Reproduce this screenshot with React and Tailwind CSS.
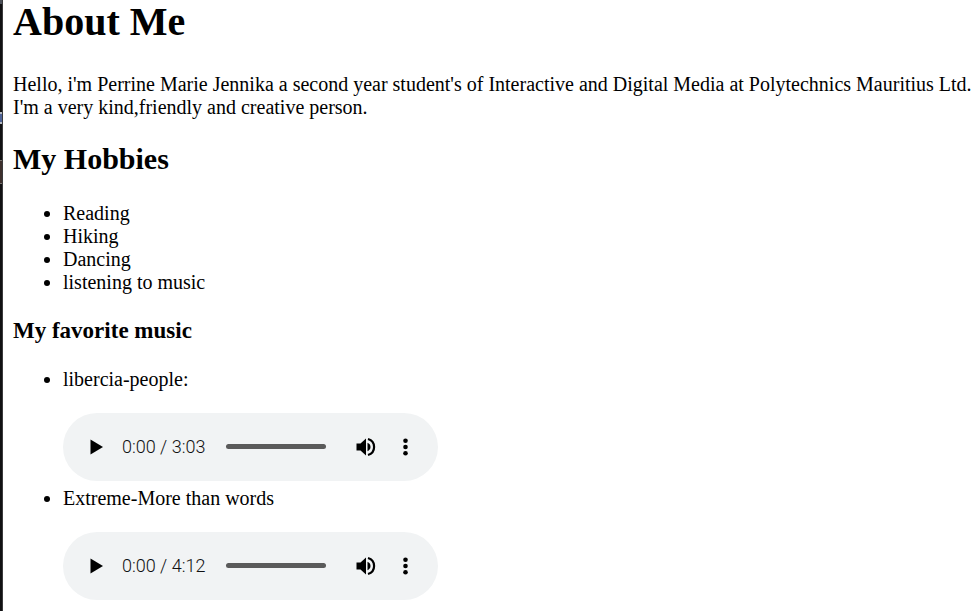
function Player({ name, duration }) {
  return (
    <div role="group" aria-label={name} className="mt-[22px] flex h-[68px] w-[375px] items-center rounded-full bg-[#f1f3f4] pb-px font-['Roboto',sans-serif]">
      <button type="button" aria-label="Play" className="ml-5 flex size-6 items-center justify-center">
        <svg viewBox="0 0 24 24" className="size-6"><path d="M7.5 4.5v15L20 12z" /></svg>
      </button>
      <span className="ml-[15px] w-[104px] whitespace-pre text-[18px] leading-6 font-light text-[#101112]">0:00 / {duration}</span>
      <input type="range" aria-label={"Seek " + name} defaultValue="0" className="h-[5px] w-[100px] appearance-none rounded-full bg-[#5a5a5a] [&::-webkit-slider-thumb]:size-0 [&::-webkit-slider-thumb]:appearance-none" />
      <button type="button" aria-label="Mute" className="ml-7 flex size-6 items-center justify-center">
        <svg viewBox="0 0 24 24" className="size-6">
          <path d="M2.500 8.500v7h4l5.500 5v-17l-5.500 5h-4zM13.500 7.800v8.400c1.800-.6 3-2.200 3-4.200s-1.200-3.600-3-4.200z" />
          <path d="M14 4a8.300 8.300 0 0 1 0 16" fill="none" stroke="black" strokeWidth="2.200" />
        </svg>
      </button>
      <button type="button" aria-label="More options" className="ml-4 flex size-6 items-center justify-center">
        <svg viewBox="0 0 24 24" className="size-6"><circle cx="11.5" cy="5.8" r="2.300" /><circle cx="11.5" cy="12" r="2.300" /><circle cx="11.5" cy="18.2" r="2.300" /></svg>
      </button>
    </div>
  );
}

export default function App() {
  return (
    <div className="flex min-h-screen bg-white">
      <div aria-hidden="true" className="flex w-[3px] shrink-0 flex-col border-r border-[#3a3a3c] bg-[#111113]">
        <div className="h-1 bg-[#4c5058]" />
        <div className="mt-[108px] h-3 border-y-2 border-[#b5bac4] bg-[#4e6296]" />
        <div className="mt-9 h-6 border-y border-[#77726f] bg-[#3d302d]" />
      </div>
      <main className="flex-1 pl-2.5 font-['Liberation_Serif',serif] text-[20px] leading-[23px] text-black">
        <h1 className="text-[40px] leading-[44px] font-bold">About Me</h1>
        <p className="mt-[29px]">
          Hello, i'm Perrine Marie Jennika a second year student's of Interactive and Digital Media at Polytechnics Mauritius Ltd.
          <br />
          I'm a very kind,friendly and creative person.
        </p>
        <h2 className="mt-[23px] text-[30px] leading-[33px] font-bold">My Hobbies</h2>
        <ul className="mt-[27px] list-disc pl-[50px]">
          <li>Reading</li>
          <li>Hiking</li>
          <li>Dancing</li>
          <li>listening to music</li>
        </ul>
        <h3 className="mt-6 text-[23px] leading-[26px] font-bold">My favorite music</h3>
        <ul className="mt-6 list-disc pl-[50px]">
          <li>libercia-people:<Player name="libercia-people" duration="3:03" /></li>
          <li className="mt-[6px]">Extreme-More than words<Player name="Extreme-More than words" duration="4:12" /></li>
        </ul>
      </main>
    </div>
  );
}
